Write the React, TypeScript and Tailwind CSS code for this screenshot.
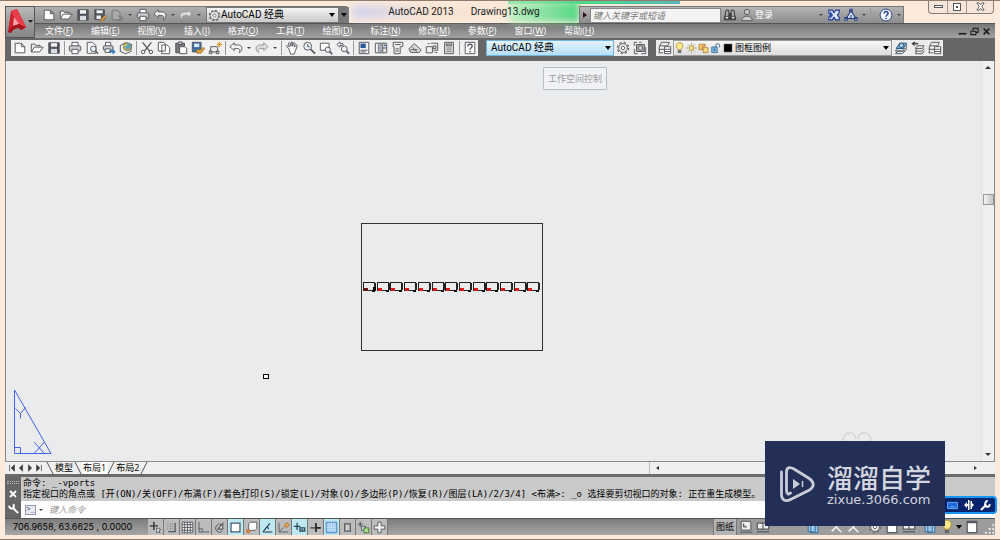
import React from "react";

const SANS = "font-['Open_Sans','Noto_Sans_CJK_SC',sans-serif]";
const UI = "font-['Roboto','Noto_Sans_CJK_SC',sans-serif]";
const MONO = "font-['DejaVu_Sans_Mono','Noto_Sans_CJK_SC',monospace]";

const icons: Record<string, React.ReactNode> = {
  new: <path d="M2.5 2.5h7l4 4v7h-11z M9.5 2.5v4h4" fill="#fff" />,
  open: (
    <>
      <path d="M1.5 12.5v-9h4l1 1.5h5v2" fill="#eee" />
      <path d="M1.5 12.5l3.5-5.5h10l-4 5.5z" fill="#fff" />
    </>
  ),
  save: (
    <>
      <path d="M2 2h12v12H2z" fill="#50545c" />
      <path d="M4.500 2.500h7v4h-7z" fill="#f4f4f4" stroke="none" />
      <path d="M4.500 9h7v5h-7z" fill="#d8dbe0" stroke="none" />
    </>
  ),
  saveAs: (
    <>
      <path d="M2 2h11v11H2z" fill="#50545c" />
      <path d="M4 2.500h7v3.500H4zM4 8.500h5v4H4z" fill="#eee" stroke="none" />
      <path d="M8 14.500l5-6 2 1.500-4.500 5z" fill="#e3a23a" stroke="#8a5a14" strokeWidth=".6" />
    </>
  ),
  cloud: (
    <>
      <path d="M2.500 2.500h6l3 3v8h-9z" fill="#aaa" stroke="#777" />
      <path d="M8.500 8l5 5M13.500 9v5h-5" stroke="#777" />
    </>
  ),
  print: (
    <>
      <path d="M4.500 6V1.500h7V6" fill="#fff" />
      <rect x="1.500" y="5.500" width="13" height="6" rx="1.500" fill="#c9ccd0" />
      <path d="M4.500 9.500h7v5h-7z" fill="#fff" />
    </>
  ),
  preview: (
    <>
      <path d="M2.500 1.500h6l4 3.500v9h-10z" fill="#fff" />
      <circle cx="9.500" cy="9" r="3.200" fill="#e4eef8" />
      <path d="M12 11.500l3 3" strokeWidth="1.600" />
    </>
  ),
  publish: (
    <>
      <path d="M4 5.500v-4h6v4" fill="#fff" />
      <rect x="1.500" y="5.500" width="11" height="5" rx="1" fill="#c9ccd0" />
      <path d="M3.500 9h6v4h-6z" fill="#fff" />
      <path d="M8 11h4V8.500l3.500 3.800L12 15.500V13H8z" fill="#2f74b8" stroke="none" />
    </>
  ),
  globe: (
    <>
      <path d="M1.500 5l6-3 7 2-1 8-6 2.500-6-2.500z" fill="#eef1f4" />
      <circle cx="9.500" cy="6.500" r="4.500" fill="#f0c956" stroke="#857536" />
      <path d="M6 7c2-3 4 0 3-5 3 0 4 2 5 4l-3 4-3-1z" fill="#5fa3c0" stroke="none" />
    </>
  ),
  cut: (
    <>
      <path d="M3 1.500l8 10M13 1.500l-8 10" strokeWidth="1.500" />
      <circle cx="3.500" cy="12.500" r="2" />
      <circle cx="12.500" cy="12.500" r="2" />
    </>
  ),
  copy: <path d="M1.500 1.500h6l2 2v8h-8zM5.500 4.500h6l3 3v7h-9z" fill="#fff" />,
  paste: (
    <>
      <path d="M2 2.500h10v11H2z" fill="#777" />
      <path d="M5 1h4v3H5z" fill="#ccc" />
      <path d="M6.500 6.500h6l2 2v6h-8z" fill="#fff" />
    </>
  ),
  match: (
    <>
      <path d="M1.500 1.500h10v11h-10z" fill="#396ba4" />
      <path d="M3.500 3h6v4h-6z" fill="#dbeafa" stroke="none" />
      <path d="M6 10h5l3-3 1.500 2-4 5H7z" fill="#e1a548" stroke="#85551c" strokeWidth=".7" />
    </>
  ),
  block: (
    <>
      <path d="M3 6.500h8v6H3zM1.500 11.500h3v3h-3zM9.500 11.500h3v3h-3z" fill="#eee" />
      <path d="M13 1v6M10 4h6M11 2l4 4M15 2l-4 4" stroke="#d99a2b" />
    </>
  ),
  undo: <path d="M1 6.500L6 2v2.500h4c6 0 6 6 2 9 1-4 0-5-3-5H6V11z" fill="#f5f5f5" />,
  redo: <path d="M15 6.500L10 2v2.500H6c-6 0-6 6-2 9-1-4 0-5 3-5h3V11z" fill="#ddd" stroke="#999" />,
  hand: <path d="M4.500 9L2 6.500c-1-1 .5-2 1.500-1L5 7 4 3c0-1.500 1.500-1.500 1.800 0L7 6V2c0-1.500 1.700-1.500 1.700 0v4l1-3.500c.5-1.300 2-.8 1.700.5L10.800 7l1.700-2c1-1 2 0 1.300 1L12 11l-1.500 4h-4z" fill="#fff" />,
  zoom: (
    <>
      <circle cx="6.500" cy="6" r="4.500" fill="#e9f1f8" />
      <path d="M6.500 3.500v3h2.500" />
      <path d="M10 9.500l5 5" strokeWidth="2" />
    </>
  ),
  zoomWin: (
    <>
      <path d="M1.500 2.500h10v8h-10z" fill="#fff" />
      <circle cx="10" cy="10" r="3" fill="#e9f1f8" />
      <path d="M12 12l3 3" strokeWidth="2" />
    </>
  ),
  zoomPrev: (
    <>
      <path d="M1 4l3.500-3v2H8v2H4.500v2z" fill="#fff" />
      <circle cx="9.500" cy="9" r="3.300" fill="#e9f1f8" />
      <path d="M12 11.500l3 3" strokeWidth="2" />
    </>
  ),
  props: (
    <>
      <path d="M2.500 1.500h11v13h-11z" fill="#f4f4f4" />
      <path d="M4 3h6v5H4z" fill="#27569a" stroke="none" />
      <path d="M4 10.500h8M4 12.500h6" />
    </>
  ),
  center: (
    <>
      <path d="M1.500 2.500h13v11h-13zM5.500 2.500v11M5.500 8h9M10 2.500v11" fill="#eee" />
      <path d="M7 4h2v2H7zM11.500 4h2v2h-2zM7 10h2v2H7z" fill="#356197" stroke="none" />
    </>
  ),
  palette: <path d="M2.500 1.500h11v5h-3v8h-7v-8h-1zM5 4h6M5 9h4M5 11.500h4" fill="#eee" />,
  sheets: <path d="M1 9l6-6 8 7-2 3H3zM3 10h8M5 7l5 5" fill="#ddd" />,
  markup: <path d="M1.500 6.500h7v7h-7zM6.500 2.500h8v8h-5M3 3h2M11 13h3M9.500 5.500h3v3h-3z" fill="#eee" />,
  calc: (
    <>
      <path d="M3 1.500h10v13H3z" fill="#ddd" />
      <path d="M5 3.500h6v2H5z" />
      <path d="M5 8h6M5 10h6M5 12h6" stroke="#888" />
    </>
  ),
  help: (
    <>
      <path d="M2.500 1.500h11v13h-11z" fill="#fff" />
      <path d="M5.500 6c0-3 5-3 5 0 0 2-2.500 1.500-2.500 4M8 11.500v1.500" strokeWidth="1.600" />
    </>
  ),
  gear: (
    <>
      <circle cx="8" cy="8" r="6.300" strokeDasharray="2.500 2.450" strokeWidth="1.500" stroke="#666" />
      <circle cx="8" cy="8" r="5" fill="#eee" stroke="#666" />
      <circle cx="8" cy="8" r="2" fill="#fff" stroke="#666" />
    </>
  ),
  gearBox: (
    <>
      <path d="M1.500 1.500h3M7 1.500h3M1.500 1.500v4M1.500 9v5.500h4M14.500 7v7.500h-5" />
      <path d="M4 4h9v8H4z" fill="#aaa" />
      <circle cx="8.500" cy="8" r="2.500" fill="#ddd" />
    </>
  ),
  layers: (
    <>
      <path d="M4 1.500h9l-2 4H2zM2 5.500l-1 4h6M2 9.500l-1 4h5" fill="#eee" />
      <path d="M7.500 6.500h7v8h-7zM7.500 9.500h7M7.500 12h7" fill="#fff" />
    </>
  ),
  bulb: (
    <>
      <path d="M5.500 10.500c0-2-2.500-2.500-2.500-5.500a5 5 0 0110 0c0 3-2.500 3.500-2.500 5.500z" fill="#fde98a" stroke="#a88a3a" />
      <path d="M6 12h4v2.500H6z" fill="#777" />
    </>
  ),
  sun: (
    <>
      <circle cx="8" cy="8" r="3.500" fill="#fbe27c" stroke="#9b7a3d" />
      <path d="M8 .5v2.500M8 13v2.500M.5 8H3M13 8h2.500M2.700 2.700l1.800 1.800M11.500 11.500l1.800 1.800M13.300 2.700l-1.800 1.800M4.500 11.500l-1.800 1.800" stroke="#9b7a3d" />
    </>
  ),
  vpFreeze: (
    <>
      <path d="M1.500 2.500h9v3h-4v5h-5z" fill="#f8c566" stroke="#b0732d" />
      <path d="M7.500 7.500h7v7h-7z" fill="#f9dc78" stroke="#b0732d" />
    </>
  ),
  unlock: (
    <>
      <path d="M2.500 6.500h8v8h-8z" fill="#7ab8e0" stroke="#315f87" />
      <path d="M8.500 6.500V4c0-3 5.500-3 5.500 0v3" stroke="#315f87" strokeWidth="1.400" />
      <path d="M6.500 9v3" stroke="#123" />
    </>
  ),
  black: <path d="M2 2h12v12H2z" fill="#000" stroke="#000" />,
  layerBlue: (
    <>
      <path d="M1.500 14.500l3-3h8l-3 3zM1.500 11.500l3-3h8l-3 3z" fill="#d6e7f6" />
      <path d="M2.500 8.500l4-6h8l-4 6z" fill="#7db4dd" stroke="#275578" />
      <circle cx="8.500" cy="5" r="2.500" fill="#a9d4f2" stroke="#275578" />
      <path d="M14 4v6l-3 3" />
    </>
  ),
  layerPrev: (
    <>
      <path d="M1 3l3-2v1.500h4v1H4V5z" fill="#222" />
      <path d="M5 8.500l2-3h8l-2 3zM5 11.500l1.500-3M13 11.500H5M13 11.500l2-3M5 14.500l1.500-3M13 14.500H5M13 14.500l2-3" fill="#eee" />
    </>
  ),
  search: (
    <>
      <path d="M3.500 2.500h3l1 11h-6zM9.500 2.500h3l2 11h-6z" fill="#aaa" stroke="#333" />
      <path d="M6.500 6h3v3h-3z" fill="#333" stroke="none" />
      <path d="M2.500 9.500h4v3h-4zM9.500 9.500h4v3h-4z" fill="#eee" stroke="#333" />
    </>
  ),
  user: (
    <>
      <circle cx="8" cy="4.500" r="3" fill="#ccc" />
      <path d="M2 14.500c0-7 12-7 12 0z" fill="#ccc" />
    </>
  ),
  exchange: (
    <>
      <path d="M2 2.500h4l2 3 2-3h4v2.500l-2 3 2 3v2.500h-4l-2-3-2 3H2V11l2-3-2-3z" fill="#dce6fa" stroke="#1f3a93" strokeWidth="1.300" />
      <path d="M3.500 3.500L7 8l-3.500 4.500z" fill="#2a4bab" stroke="none" />
    </>
  ),
  triangle: <path d="M8 3l5.500 9h-11zM6.500 1.500h3v3h-3zM1 11h3v3H1zM12 11h3v3h-3zM8 8v4" fill="#cfdaf2" stroke="#2c4380" strokeWidth="1.200" />,
  question: (
    <>
      <circle cx="8" cy="8" r="6.800" fill="#eef3ff" stroke="#2c4380" />
      <path d="M5.800 6.300c0-3 4.500-2.800 4.500 0 0 1.700-2.200 1.700-2.200 3.700M8 11.200v1.500" stroke="#25408f" strokeWidth="1.700" />
    </>
  ),
  infer: (
    <>
      <path d="M6 1v10M1 6h10" strokeWidth="1.800" stroke="#333" />
      <path d="M9.500 8.500l5 2-2 1 1 3-2-1-2 1z" fill="#eee" />
    </>
  ),
  snap: (
    <>
      <path d="M3 3.500h7M3 6.500h7M3 9.500h7" strokeDasharray="1 2" strokeWidth="1" />
      <path d="M12.500 2.500v11M4 13h9" strokeWidth="1.600" />
    </>
  ),
  grid: <path d="M1.500 1.500h13v13h-13zM4.500 1.500v13M8 1.500v13M11.500 1.500v13M1.500 4.500h13M1.500 8h13M1.500 11.500h13" fill="#eee" strokeWidth="1.1" />,
  ortho: <path d="M2.500 1v12.500H15M2.500 9.500h4v4" />,
  polar: (
    <>
      <path d="M11.500 12.500a5 5 0 11-1-8" />
      <path d="M6 10l6-7v7z" fill="#ddd" strokeWidth="1.400" />
    </>
  ),
  osnap: <path d="M2.500 2.500h11v11h-11z" fill="#fff" stroke="#456" strokeWidth="1.500" />,
  osnap3: (
    <>
      <path d="M4.500 3.500l2-2h8v8l-2 2h-8z" fill="#fff" />
      <circle cx="4" cy="12.500" r="2" fill="#e99747" stroke="#b6641f" />
    </>
  ),
  track: <path d="M2 13.500h12M3 12.500L11 3M9 10c0-2-1-3-2-3" stroke="#234" strokeWidth="1.300" />,
  ducs: (
    <>
      <path d="M2.500 2v11.500H14M3 13l5-5" />
      <path d="M9 6l3-4 3 3-3 3z" fill="#e9a654" stroke="#a86617" />
    </>
  ),
  dyn: <path d="M1 6.500h8M5 2v9M8.500 8.500h6v4h-6zM10.500 10.500h2" strokeWidth="1.500" stroke="#245" />,
  lwt: (
    <>
      <path d="M1.500 8.500h7" strokeWidth="1.200" stroke="#222" />
      <path d="M8 8.500h6.500M8.500 2.500v11" strokeWidth="2" stroke="#222" />
    </>
  ),
  tpy: (
    <>
      <path d="M1.500 1.500h13v13h-13z" fill="#9fc9ee" stroke="#3778b5" />
      <path d="M2 5h12M2 8h12M2 11h12M5 2v12M8 2v12M11 2v12" stroke="#dff0ff" strokeDasharray="1 1" />
    </>
  ),
  qp: <path d="M4.500 3.500h7v9h-7zM4 3.500h8" strokeWidth="1.500" fill="#c8c8c8" />,
  sc: (
    <>
      <path d="M1 4h6M4 1v6" strokeWidth="1.500" />
      <path d="M5.500 6.500h5v5h-5z" fill="#ddd" />
      <path d="M8.500 8.500h6v6h-6z" fill="#a9dc8f" stroke="#39752c" />
    </>
  ),
  cross: <path d="M6 1.500h4V6h4.500v4H10v4.500H6V10H1.500V6H6z" fill="#f2f4f8" stroke="#555" />,
  layout: <path d="M2.500 1.500h11v10h-11zM1 14h14M5 4v4h4" fill="#eee" />,
  views: <path d="M1.500 3.500h13v7h-13zM8 3v7M1 13.500h14" fill="#eee" strokeWidth="1.300" />,
  blueBox: <path d="M2.500 2.500h8v11h-8zM5.500 5.500h8v9h-8z" fill="#9cc9ee" stroke="#356b9a" />,
  scale: <path d="M2 13l5-5 6 6M7 8l3-4 4 1" stroke="#f3f3f3" strokeWidth="1.700" />,
  window: <path d="M2.500 1.500h11v13h-11zM3 3h10" fill="#fff" strokeWidth="1.400" />,
  min: <path d="M1 12h14" stroke="#222" strokeWidth="3" />,
  restore: <path d="M1.500 7.500h9v6h-9zM5.500 7V2.500h9v7H11" stroke="#222" strokeWidth="2" />,
  close: <path d="M3 3l10 10M13 3L3 13" stroke="#222" strokeWidth="3" />,
};

function Icon({ name, className = "size-[14px]" }: { name: string; className?: string }) {
  return (
    <svg viewBox="0 0 16 16" className={className + " shrink-0"} fill="none" stroke="#55585e" strokeWidth="1.1" aria-hidden="true">
      {icons[name]}
    </svg>
  );
}

function Tool({ name }: { name: string }) {
  return (
    <button type="button" aria-label={name} className="flex h-full w-[17px] shrink-0 items-center justify-center">
      <Icon name={name} />
    </button>
  );
}

function Caret({ className = "" }: { className?: string }) {
  return <span aria-hidden="true" className={"border-x-[3px] border-t-[4px] border-x-transparent border-t-black " + className} />;
}

function Drop() {
  return (
    <button type="button" aria-label="more" className="flex h-full w-[9px] shrink-0 items-center justify-center">
      <span className="border-x-2 border-t-2 border-x-transparent border-t-[#444]" />
    </button>
  );
}

function Sep() {
  return (
    <span className="flex h-full w-1 shrink-0 justify-center py-px">
      <span className="w-px bg-[#9a9a9a]" />
    </span>
  );
}

function Tools({ items }: { items: string[] }) {
  return (
    <>
      {items.map((n, i) => (n === "|" ? <Sep key={i} /> : n === "v" ? <Drop key={i} /> : <Tool key={i} name={n} />))}
    </>
  );
}

const menus = ["文件(F)", "编辑(E)", "视图(V)", "插入(I)", "格式(O)", "工具(T)", "绘图(D)", "标注(N)", "修改(M)", "参数(P)", "窗口(W)", "帮助(H)"];

const toggles: [string, boolean][] = [
  ["infer", false], ["snap", false], ["grid", false], ["ortho", false], ["polar", false],
  ["osnap", true], ["osnap3", false], ["track", true], ["ducs", false], ["dyn", true],
  ["lwt", false], ["tpy", true], ["qp", false], ["sc", false], ["cross", false],
];

function Header() {
  return (
    <header className="flex shrink-0 pt-[6px]">
      <button type="button" aria-label="应用程序菜单" className="flex h-8 w-[30px] shrink-0 items-center border border-[#555] bg-linear-to-b from-[#b9b9b9] to-[#858585]">
        <svg viewBox="0 0 28 30" className="h-[30px] w-7" aria-hidden="true">
          <path d="M2 25L5 4l6-2 9 18-4 3-3-3-6 2-2 4z" fill="#cf1f2a" />
          <path d="M5 4l6-2 9 18-5 2z" fill="#ea3f4a" />
          <path d="M8 10l5 7-6 2z" fill="#f3a9ab" />
          <path d="M2 25l5-6 6-2 7 3-5 3-3-2-5 2-2 3z" fill="#a8141f" />
          <path d="M22 13h5l-2.500 3z" fill="#222" />
        </svg>
      </button>
      <div className="min-w-0 flex-1">
        <div className="flex h-[17px]">
          <div className="flex shrink-0 items-center rounded-tr border-t border-[#777] bg-linear-to-b from-[#b0b0b0] to-[#8f8f8f] pl-[5px]">
            <Tools items={["new", "open", "save", "saveAs", "cloud", "v", "print", "undo", "v", "redo", "v"]} />
            <div className="ml-[3px] flex h-full w-[133px] items-center border border-[#777] bg-linear-to-b from-[#f4f4f4] to-[#c9c9c9] pl-px">
              <Icon name="gear" className="size-[13px]" />
              <select aria-label="工作空间" className={"h-full min-w-0 flex-1 appearance-none bg-transparent text-[10px] leading-[14px] text-black " + UI}>
                <option>AutoCAD 经典</option>
              </select>
              <Caret className="mr-[3px]" />
            </div>
            <button type="button" aria-label="自定义" className="flex h-full w-[10px] items-center justify-center bg-[#777]">
              <Caret />
            </button>
          </div>
          <div className="relative min-w-0 flex-1">
            <div className="absolute -top-1 right-0 h-5 w-[70px] bg-linear-to-r from-[#b9efc2] to-[#4ed682] blur-[3px]" aria-hidden="true" />
            <div className="absolute top-0 left-1 h-3 w-[150px] bg-linear-to-r from-[#c9cdf2] via-[#f3dfce] to-[#f9e7d7] blur-[4px]" aria-hidden="true" />
            <h1 className={"relative -mt-[2px] flex justify-center gap-[17px] text-[10px] leading-[15px] font-normal whitespace-nowrap text-[#222] " + UI}>
              <span>AutoCAD 2013</span>
              <span>Drawing13.dwg</span>
            </h1>
          </div>
          <div className="relative flex w-[325px] shrink-0 items-center border border-b-0 border-[#777] bg-linear-to-b from-[#b4b4b4] to-[#8c8c8c]">
            <button type="button" aria-label="展开" className="flex w-[10px] justify-center">
              <span className="border-y-[3px] border-l-4 border-y-transparent border-l-[#311]" />
            </button>
            <input aria-label="键入关键字或短语" placeholder="键入关键字或短语" className="h-[15px] w-[131px] border border-[#888] bg-[#f4f4f4] px-[2px] text-[9px] italic placeholder:text-[#777]" />
            <Tools items={["search", "user"]} />
            <button type="button" className="text-[9px] text-white">登录</button>
            <span className="flex-1" />
            <Tools items={["v", "exchange", "triangle", "v", "|"]} />
            <span className="w-[5px]" />
            <Tools items={["question", "v"]} />
          </div>
          <div className="-mt-[6px] mr-px ml-6 flex h-[14px] w-[66px] shrink-0 rounded-b border border-t-0 border-[#8b7b70] bg-[#f6e6da]">
            <button type="button" aria-label="最小化" className="flex flex-1 items-center justify-center border-r border-[#a59689]">
              <span className="h-[3px] w-[9px] border border-[#555] bg-white" />
            </button>
            <button type="button" aria-label="还原" className="flex flex-1 items-center justify-center border-r border-[#a59689]">
              <span className="size-[8px] border border-[#555] bg-white p-[2px]"><span className="block h-[2px] border border-[#555]" /></span>
            </button>
            <button type="button" aria-label="关闭" className="flex flex-[1.4] items-center justify-center">
              <svg viewBox="0 0 10 10" className="size-[9px]"><path d="M1 1h2.500L5 3l1.500-2H9L6.500 5 9 9H6.500L5 7 3.500 9H1l2.500-4z" fill="#fff" stroke="#555" /></svg>
            </button>
          </div>
        </div>
        <nav className="flex h-[15px] items-center justify-between border-t border-[#555] bg-linear-to-b from-[#777] to-[#a2a2a2] pr-1 pl-[10px]">
          <div className="flex gap-[18px]">
            {menus.map((m) => (
              <button type="button" key={m} className="text-[9px] leading-[14px] whitespace-nowrap text-white">
                {m.slice(0, 3)}<u>{m[3]}</u>)
              </button>
            ))}
          </div>
          <div className="flex items-center gap-[3px]">
            {["min", "restore", "close"].map((n) => (
              <button type="button" key={n} aria-label={n}><Icon name={n} className="size-[9px]" /></button>
            ))}
          </div>
        </nav>
      </div>
    </header>
  );
}

function Toolbars() {
  return (
    <div className="flex h-[23px] shrink-0 items-start bg-[#666] pt-[2px] pl-[6px]">
      <div className="flex h-4 shrink-0 bg-[#f0f0f0]">
        <Tools items={["new", "open", "save", "|", "print", "preview", "publish", "globe", "|", "cut", "copy", "paste", "match", "block", "|", "undo", "v", "redo", "v", "|", "hand", "zoom", "zoomWin", "zoomPrev", "|", "props", "center", "palette", "sheets", "markup", "calc", "|", "help"]} />
      </div>
      <div className="ml-2 flex h-4 shrink-0 bg-[#ececec]">
        <div className="flex w-[128px] items-center border border-[#6fb4dc] bg-linear-to-b from-[#e4f4fd] to-[#b5def6]">
          <select aria-label="工作空间控制" className={"h-full min-w-0 flex-1 appearance-none bg-transparent pl-1 text-[10px] leading-[14px] text-black " + UI}>
            <option>AutoCAD 经典</option>
          </select>
          <Caret className="mr-[2px]" />
        </div>
        <Tools items={["gear", "gearBox"]} />
      </div>
      <div className="ml-2 flex h-4 shrink-0 bg-[#ececec]">
        <Tools items={["layers"]} />
        <div className="flex w-[219px] items-center border border-[#999] bg-linear-to-b from-[#f6f6f6] to-[#dedede]">
          {["bulb", "sun", "vpFreeze", "unlock"].map((n) => (
            <Icon key={n} name={n} className="mr-px h-3 w-[11px]" />
          ))}
          <Icon name="black" className="ml-px size-[10px]" />
          <select aria-label="图层" className="h-full min-w-0 flex-1 appearance-none bg-transparent pl-[2px] text-[9px] leading-[14px] text-black">
            <option>图框图例</option>
          </select>
          <Caret className="mr-[2px]" />
        </div>
        <Tools items={["layerBlue", "layerPrev", "layers"]} />
      </div>
    </div>
  );
}

function Drawing() {
  const frames = Array.from({ length: 13 }, (_, i) => i);
  return (
    <>
      <button type="button" className="absolute top-[6px] left-[537px] h-[23px] w-16 rounded-[1px] border border-[#b9bbc6] bg-[#f1f2f5] text-[9px] text-[#9b9ca0]">工作空间控制</button>
      <svg viewBox="0 0 182 128" className="absolute top-[162px] left-[355px] h-32 w-[182px]" shapeRendering="crispEdges" aria-hidden="true">
        <rect x=".5" y=".5" width="181" height="127" fill="none" stroke="#333" />
        {frames.map((i) => {
          const x = Math.round(2 + i * 13.7);
          return (
            <g key={i}>
              <path d={`M${x + 0.5} 59.500h11v8h-11zM${x + 12.5} 60v7`} fill="none" stroke="#222" />
              <path d={`M${x + 9} 67h3v2h-3z`} fill="#111" />
              <path d={`M${x + 1} 65h4v3h-4z`} fill={i === 0 ? "#6b1414" : "#e01818"} />
              {i === 0 && <path d={`M${x + 10} 64h3v4h-3z`} fill="#000" />}
            </g>
          );
        })}
      </svg>
      <svg viewBox="0 0 6 5" className="absolute top-[313px] left-[257px] h-[5px] w-[6px]" shapeRendering="crispEdges" aria-hidden="true">
        <rect x=".5" y=".5" width="5" height="4" fill="#fff" stroke="#000" />
      </svg>
      <svg viewBox="0 0 38 66" className="absolute bottom-[6px] left-2 h-[66px] w-[38px]" fill="none" stroke="#4363ea" aria-hidden="true">
        <path d="M.5 1v63.500H37zM.5 58.500h6v6M1.500 19.500l5 5 5-6M6.500 24.500v5M20 53l10 11M30.500 53L20.500 64" />
      </svg>
      <svg viewBox="0 0 30 12" className="absolute right-[109px] bottom-[17px] h-3 w-[30px]" fill="none" stroke="#d3d4d5" strokeWidth="1.500" aria-hidden="true">
        <path d="M1 12C0-2 13-2 14 7M16 7c1-9 14-9 13 5" />
      </svg>
    </>
  );
}

function LayoutTabs() {
  return (
    <div className="flex h-[13px] shrink-0 border-t border-[#8a8a8a] bg-[#f0f0f0] text-[9px] leading-[12px] text-black">
      <div className="flex w-[41px] shrink-0 items-center justify-between px-[3px]">
        {["M2 1v8M8 1v8L4 5z", "M7 1v8L3 5z", "M3 1v8l4-4z", "M8 1v8M2 1v8l4-4z"].map((d) => (
          <button type="button" key={d} aria-label="切换布局" className="flex">
            <svg viewBox="0 0 10 10" className="size-2" fill="#333" stroke="#555"><path d={d} /></svg>
          </button>
        ))}
      </div>
      {["模型", "布局1", "布局2"].map((t, i) => (
        <React.Fragment key={t}>
          <svg viewBox="0 0 8 12" className="h-3 w-2 shrink-0" fill={i === 1 ? "#fff" : "none"} stroke="#555" aria-hidden="true">
            <path d={i === 2 ? "M1 12L7 0" : "M1 0l6 12"} />
          </svg>
          <button type="button" className={"shrink-0 px-px whitespace-nowrap " + (i === 1 ? "bg-white" : "")}>{t}</button>
        </React.Fragment>
      ))}
      <svg viewBox="0 0 8 12" className="h-3 w-2 shrink-0" stroke="#555" aria-hidden="true"><path d="M1 12L7 0" /></svg>
      <div className="flex-1" />
      <div className="flex w-[346px] shrink-0 items-center justify-between border-l border-[#bbb] pr-[18px] pl-[6px]">
        <span className="border-y-2 border-r-[3px] border-y-transparent border-r-[#333]" />
        <span className="border-y-2 border-l-[3px] border-y-transparent border-l-[#333]" />
      </div>
    </div>
  );
}

function CommandLine() {
  return (
    <section className="flex h-11 shrink-0 border-t-[3px] border-[#6b6b6b]">
      <div className="flex w-4 shrink-0 flex-col items-center justify-between bg-[#666] py-1">
        <span className="h-[3px] w-3 border-y border-dotted border-[#bbb]" />
        <svg viewBox="0 0 8 8" className="size-2" stroke="#fff" strokeWidth="1.800"><path d="M1 1l6 6M7 1L1 7" /></svg>
        <svg viewBox="0 0 12 12" className="size-[11px]" fill="none" stroke="#fff" strokeWidth="2.200"><path d="M5 5l6 6M1.500 3a2.500 2.500 0 104-1.500" /></svg>
      </div>
      <div className={"flex min-w-0 flex-1 flex-col " + MONO}>
        <div className="flex h-6 flex-col items-start overflow-hidden bg-[#c9c9c9] pt-px pl-[2px] text-[9px] leading-[11px] whitespace-nowrap text-black">
          <p>命令: _-vports</p>
          <p>指定视口的角点或 [开(ON)/关(OFF)/布满(F)/着色打印(S)/锁定(L)/对象(O)/多边形(P)/恢复(R)/图层(LA)/2/3/4] &lt;布满&gt;: _o 选择要剪切视口的对象: 正在重生成模型。</p>
        </div>
        <div className="flex flex-1 items-center bg-white pl-1">
          <span className="flex h-[10px] w-[11px] items-center justify-center border border-[#99a] bg-[#e6e9f4] text-[7px] leading-none text-[#446]">&gt;_</span>
          <Drop />
          <input aria-label="键入命令" placeholder="键入命令" className="h-full min-w-0 flex-1 pl-1 text-[9px] italic outline-none placeholder:text-[#999]" />
        </div>
      </div>
    </section>
  );
}

function StatusBar() {
  return (
    <footer className="flex h-[17px] shrink-0 items-center border-t border-[#555] bg-linear-to-b from-[#7d7d7d] to-[#a6a6a6]">
      <span className="w-[143px] shrink-0 pl-2 font-['Inter',sans-serif] text-[9px] whitespace-pre text-black">706.9658, 63.6625 , 0.0000</span>
      <div className="flex h-full shrink-0">
        {toggles.map(([n, on]) => (
          <button type="button" key={n} aria-label={n} aria-pressed={on} className={"flex w-4 items-center justify-center border-r border-[#777] " + (on ? "bg-[#bfe9f2]" : "bg-[#bcbcbc]")}>
            <Icon name={n} className="size-[13px]" />
          </button>
        ))}
      </div>
      <div className="flex-1" />
      <button type="button" className="h-full border-x border-[#777] bg-[#b4b4b4] px-[2px] text-[9px] whitespace-nowrap text-black">图纸</button>
      <div className="flex h-full w-[258px] shrink-0 items-center bg-[#9c9c9c]">
        <Tools items={["layout", "views"]} />
        <span className="w-9" />
        <Tools items={["blueBox"]} />
        <span className="w-2" />
        <Tools items={["scale", "scale", "|", "gear", "window", "views", "|", "blueBox", "bulb"]} />
        <span className="flex-1" />
        <Caret className="mr-[2px]" />
        <Tools items={["window"]} />
        <svg viewBox="0 0 10 10" className="mt-1 mr-px ml-1 size-[10px]" fill="#eee" aria-hidden="true"><path d="M8 0h2v2H8zM4 4h2v2H4zM8 4h2v2H8zM0 8h2v2H0zM4 8h2v2H4zM8 8h2v2H8z" /></svg>
      </div>
    </footer>
  );
}

export default function App() {
  return (
    <div className={"relative flex h-screen flex-col overflow-hidden border-t border-b border-[#8f7a6b] bg-[#fcebdc] px-[5px] pb-1 " + SANS}>
      <div className="absolute top-0 left-[508px] h-[3px] w-[172px] bg-linear-to-r from-[#7fe09a] via-[#4fd489] to-[#5cb6b8]" aria-hidden="true" />
      <div className="-mt-px flex min-h-0 flex-1 flex-col">
        <Header />
        <Toolbars />
        <main className="flex min-h-0 flex-1 border-x border-[#888] bg-[#eaebed]">
          <div className="relative min-w-0 flex-1">
            <Drawing />
          </div>
          <div className="flex w-[13px] shrink-0 flex-col items-center justify-between border-l border-[#e0e0e0] bg-[#efefef] py-[5px]">
            <span className="border-x-[3px] border-b-[3px] border-x-transparent border-b-[#333]" />
            <button type="button" aria-label="滚动" className="mb-[124px] size-[11px] border border-[#999] bg-linear-to-r from-[#f4f4f4] to-[#c4c4c4]" />
            <span className="border-x-[3px] border-t-[3px] border-x-transparent border-t-[#333]" />
          </div>
        </main>
        <LayoutTabs />
        <CommandLine />
        <StatusBar />
      </div>
      <div className="absolute right-[3px] bottom-[25px] flex h-[18px] w-[60px] items-center justify-end gap-[6px] rounded-sm border-2 border-[#1595f5] bg-[#06246c] pr-1">
        <svg viewBox="0 0 12 10" className="h-[9px] w-[11px]" fill="#2267d8" stroke="#6fb2ff"><path d="M.5 1.500h11v7H.5zM3 6.500h6" /></svg>
        <svg viewBox="0 0 10 10" className="size-[10px]" fill="#fff"><path d="M0 5l3-3v2h1V0h1.500v10H4V6H3v2zM6.500 1v8H8V7l2-2-2-2V1z" /></svg>
        <svg viewBox="0 0 12 12" className="size-[11px]" fill="none" stroke="#fff" strokeWidth="2.200"><path d="M1 11l6-6M6 3.500a2.500 2.500 0 104.500 1M6 3.500C6 2 7 1 8.500 1" /></svg>
      </div>
      <div className="absolute right-[55px] bottom-[13px] flex h-[85px] w-[180px] items-center bg-[#242f57] pl-[14px] text-[#d3d6df]">
        <svg viewBox="0 0 36 36" className="size-9 shrink-0" fill="none" stroke="#c9ccd6" strokeWidth="2.800" strokeLinecap="round" aria-hidden="true">
          <path d="M2.500 6v22c0 7 5 8 10 5l18-9c6-4 4-9-1-12L15 3C10 0 7.500 2 7.500 6v18c0 4 2 5 4 3" />
          <path d="M14 13l7 5-7 5z" fill="#c9ccd6" stroke="none" />
          <path d="M23.500 15.500v5" strokeWidth="1.500" />
        </svg>
        <div className="ml-3 flex flex-col items-start">
          <p className="font-['Noto_Sans_CJK_SC',sans-serif] text-[26px] leading-[32px] font-medium whitespace-nowrap">溜溜自学</p>
          <p className="font-['DejaVu_Sans',sans-serif] text-[13px] leading-[14px] whitespace-nowrap">zixue.3066.com</p>
        </div>
      </div>
    </div>
  );
}
